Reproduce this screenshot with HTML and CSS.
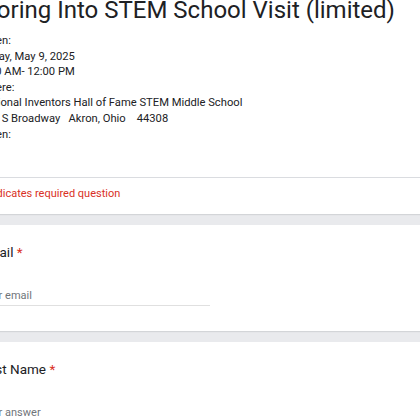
FILE: index.html
```html
<!DOCTYPE html>
<html>
<head>
<meta charset="utf-8">
<link rel="stylesheet" href="styles.css">
</head>
<body>
<div class="form">
  <div class="card header">
    <h1 class="title">Exploring Into STEM School Visit (limited)</h1>
    <div class="desc">
      <div>When:</div>
      <div>Friday, May 9, 2025</div>
      <div>9:00 AM- 12:00 PM</div>
      <div>Where:</div>
      <div>National Inventors Hall of Fame STEM Middle School</div>
      <div>199 S Broadway&nbsp;&nbsp; Akron, Ohio &nbsp;&nbsp; 44308</div>
      <div>When:</div>
    </div>
    <div class="divider"></div>
    <div class="required">* Indicates required question</div>
  </div>
  <div class="card question">
    <div class="label">Email <span class="star">*</span></div>
    <div class="input"><span class="placeholder">Your email</span></div>
  </div>
  <div class="card question">
    <div class="label">First Name <span class="star">*</span></div>
    <div class="input"><span class="placeholder">Your answer</span></div>
  </div>
</div>
</body>
</html>
```
FILE: styles.css
```css
html, body {
  margin: 0;
  padding: 0;
  background: #e9eaed;
  overflow: hidden;
  width: 420px;
  height: 420px;
}
.form {
  margin-left: -20px;
  display: flex;
  flex-direction: column;
  gap: 11px;
  font-family: Roboto, "Liberation Sans", sans-serif;
  color: #202124;
}
.card {
  background: #fff;
  width: 600px;
  box-shadow: 0 1px 1px rgba(60, 64, 67, 0.12);
}
.header {
  margin-top: -5px;
}
.title {
  margin: 0 0 0 -28px;
  font-weight: 400;
  font-size: 24px;
  line-height: 30px;
  letter-spacing: 0;
}
.desc {
  margin-top: 8px;
  font-size: 11.2px;
  line-height: 15.6px;
  padding-bottom: 35px;
}
.divider {
  height: 1px;
  background: #dadce0;
}
.required {
  color: #d93025;
  font-size: 11px;
  line-height: 16px;
  padding: 8px 0 12px;
  margin-left: 0;
}
.question {
  padding: 17px 0 25px;
}
.label {
  font-size: 13.5px;
  line-height: 20px;
}
.star {
  color: #d93025;
}
.input {
  margin-top: 26px;
  width: 230px;
  border-bottom: 1px solid #e0e0e0;
  padding-bottom: 1px;
  font-size: 11px;
  line-height: 16px;
}
.placeholder {
  color: #70757a;
}
```
